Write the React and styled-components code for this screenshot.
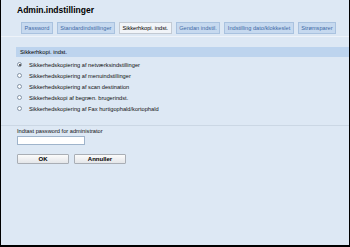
import React from "react";
import styled, { createGlobalStyle } from "styled-components";

const Global = createGlobalStyle`
  html, body { margin: 0; padding: 0; background: #dde8f4; }
  body { font-family: "Liberation Sans", Arial, sans-serif; }
  * { box-sizing: border-box; }
`;

const Frame = styled.div`
  width: 350px;
  height: 247px;
  background: #dde8f4;
  border-left: 1px solid #000;
  border-right: 1px solid #000;
  border-bottom: 2px solid #000;
  display: flex;
  flex-direction: column;
  overflow: hidden;
`;

const Title = styled.h1`
  margin: 5px 0 0 16px;
  font-size: 8.5px;
  line-height: 10px;
  font-weight: bold;
  color: #000;
`;

const TabRow = styled.div`
  display: flex;
  gap: 4px;
  margin: 7px 0 0 20px;
`;

const Tab = styled.div`
  height: 12px;
  padding: 0 2.5px;
  display: flex;
  align-items: center;
  font-size: 5.65px;
  white-space: nowrap;
  border: 1px solid ${(p) => (p.$active ? "#c3cad3" : "#a9c2df")};
  background: ${(p) => (p.$active ? "#f1f4f8" : "#c6d9ef")};
  color: ${(p) => (p.$active ? "#000" : "#3f6aa6")};
`;

const Divider = styled.div`
  height: 1px;
  margin-top: ${(p) => p.$top}px;
  background: ${(p) => p.$color};
`;

const SectionHeader = styled.div`
  margin: 10px 0 0 15px;
  height: 10px;
  padding-left: 4px;
  display: flex;
  align-items: center;
  background: #bdd4ee;
  font-size: 5.8px;
  color: #000;
`;

const RadioList = styled.div`
  display: flex;
  flex-direction: column;
  padding-top: 2px;
`;

const RadioRow = styled.label`
  height: 11px;
  display: flex;
  align-items: center;
  gap: 7px;
  padding-left: 16px;
  font-size: 5.7px;
  color: #111;
`;

const RadioDot = styled.span`
  width: 5px;
  height: 5px;
  border-radius: 50%;
  border: 0.8px solid #8494a6;
  background: #fbfcfd;
  display: flex;
  align-items: center;
  justify-content: center;
  &::after {
    content: "";
    width: 2px;
    height: 2px;
    border-radius: 50%;
    background: ${(p) => (p.$checked ? "#333" : "transparent")};
  }
`;

const FormBlock = styled.div`
  display: flex;
  flex-direction: column;
  padding-left: 16px;
  margin-top: 2px;
`;

const FieldLabel = styled.div`
  font-size: 5.7px;
  line-height: 7px;
  color: #111;
`;

const Input = styled.div`
  margin-top: 1px;
  width: 68px;
  height: 9px;
  background: #fff;
  border: 1px solid #9fb4cb;
`;

const ButtonRow = styled.div`
  display: flex;
  gap: 5px;
  margin-top: 9px;
`;

const Button = styled.div`
  width: 52px;
  height: 10px;
  display: flex;
  align-items: center;
  justify-content: center;
  font-size: 6px;
  font-weight: bold;
  color: #000;
  background: linear-gradient(#fbfbfb, #e4e6e9);
  border: 1px solid #a9aeb5;
  border-radius: 1px;
`;

const tabs = [
  "Password",
  "Standardindstillinger",
  "Sikkerhkopi. indst.",
  "Gendan indstil.",
  "Indstilling dato/klokkeslet",
  "Strømsparer",
];

const options = [
  "Sikkerhedskopiering af netværksindstillinger",
  "Sikkerhedskopiering af menuindstillinger",
  "Sikkerhedskopiering af scan destination",
  "Sikkerhedskopi af begræn. brugerindst.",
  "Sikkerhedskopiering af Fax hurtigophald/kortophald",
];

export default function App() {
  return (
    <>
      <Global />
      <Frame>
        <Title>Admin.indstillinger</Title>
        <TabRow>
          {tabs.map((t, i) => (
            <Tab key={t} $active={i === 2}>
              {t}
            </Tab>
          ))}
        </TabRow>
        <Divider $top={2} $color="#eef3f9" />
        <SectionHeader>Sikkerhkopi. indst.</SectionHeader>
        <RadioList>
          {options.map((o, i) => (
            <RadioRow key={o}>
              <RadioDot $checked={i === 0} />
              {o}
            </RadioRow>
          ))}
        </RadioList>
        <Divider $top={11} $color="#cbd7e4" />
        <FormBlock>
          <FieldLabel>Indtast password for administrator</FieldLabel>
          <Input />
          <ButtonRow>
            <Button>OK</Button>
            <Button>Annuller</Button>
          </ButtonRow>
        </FormBlock>
      </Frame>
    </>
  );
}
